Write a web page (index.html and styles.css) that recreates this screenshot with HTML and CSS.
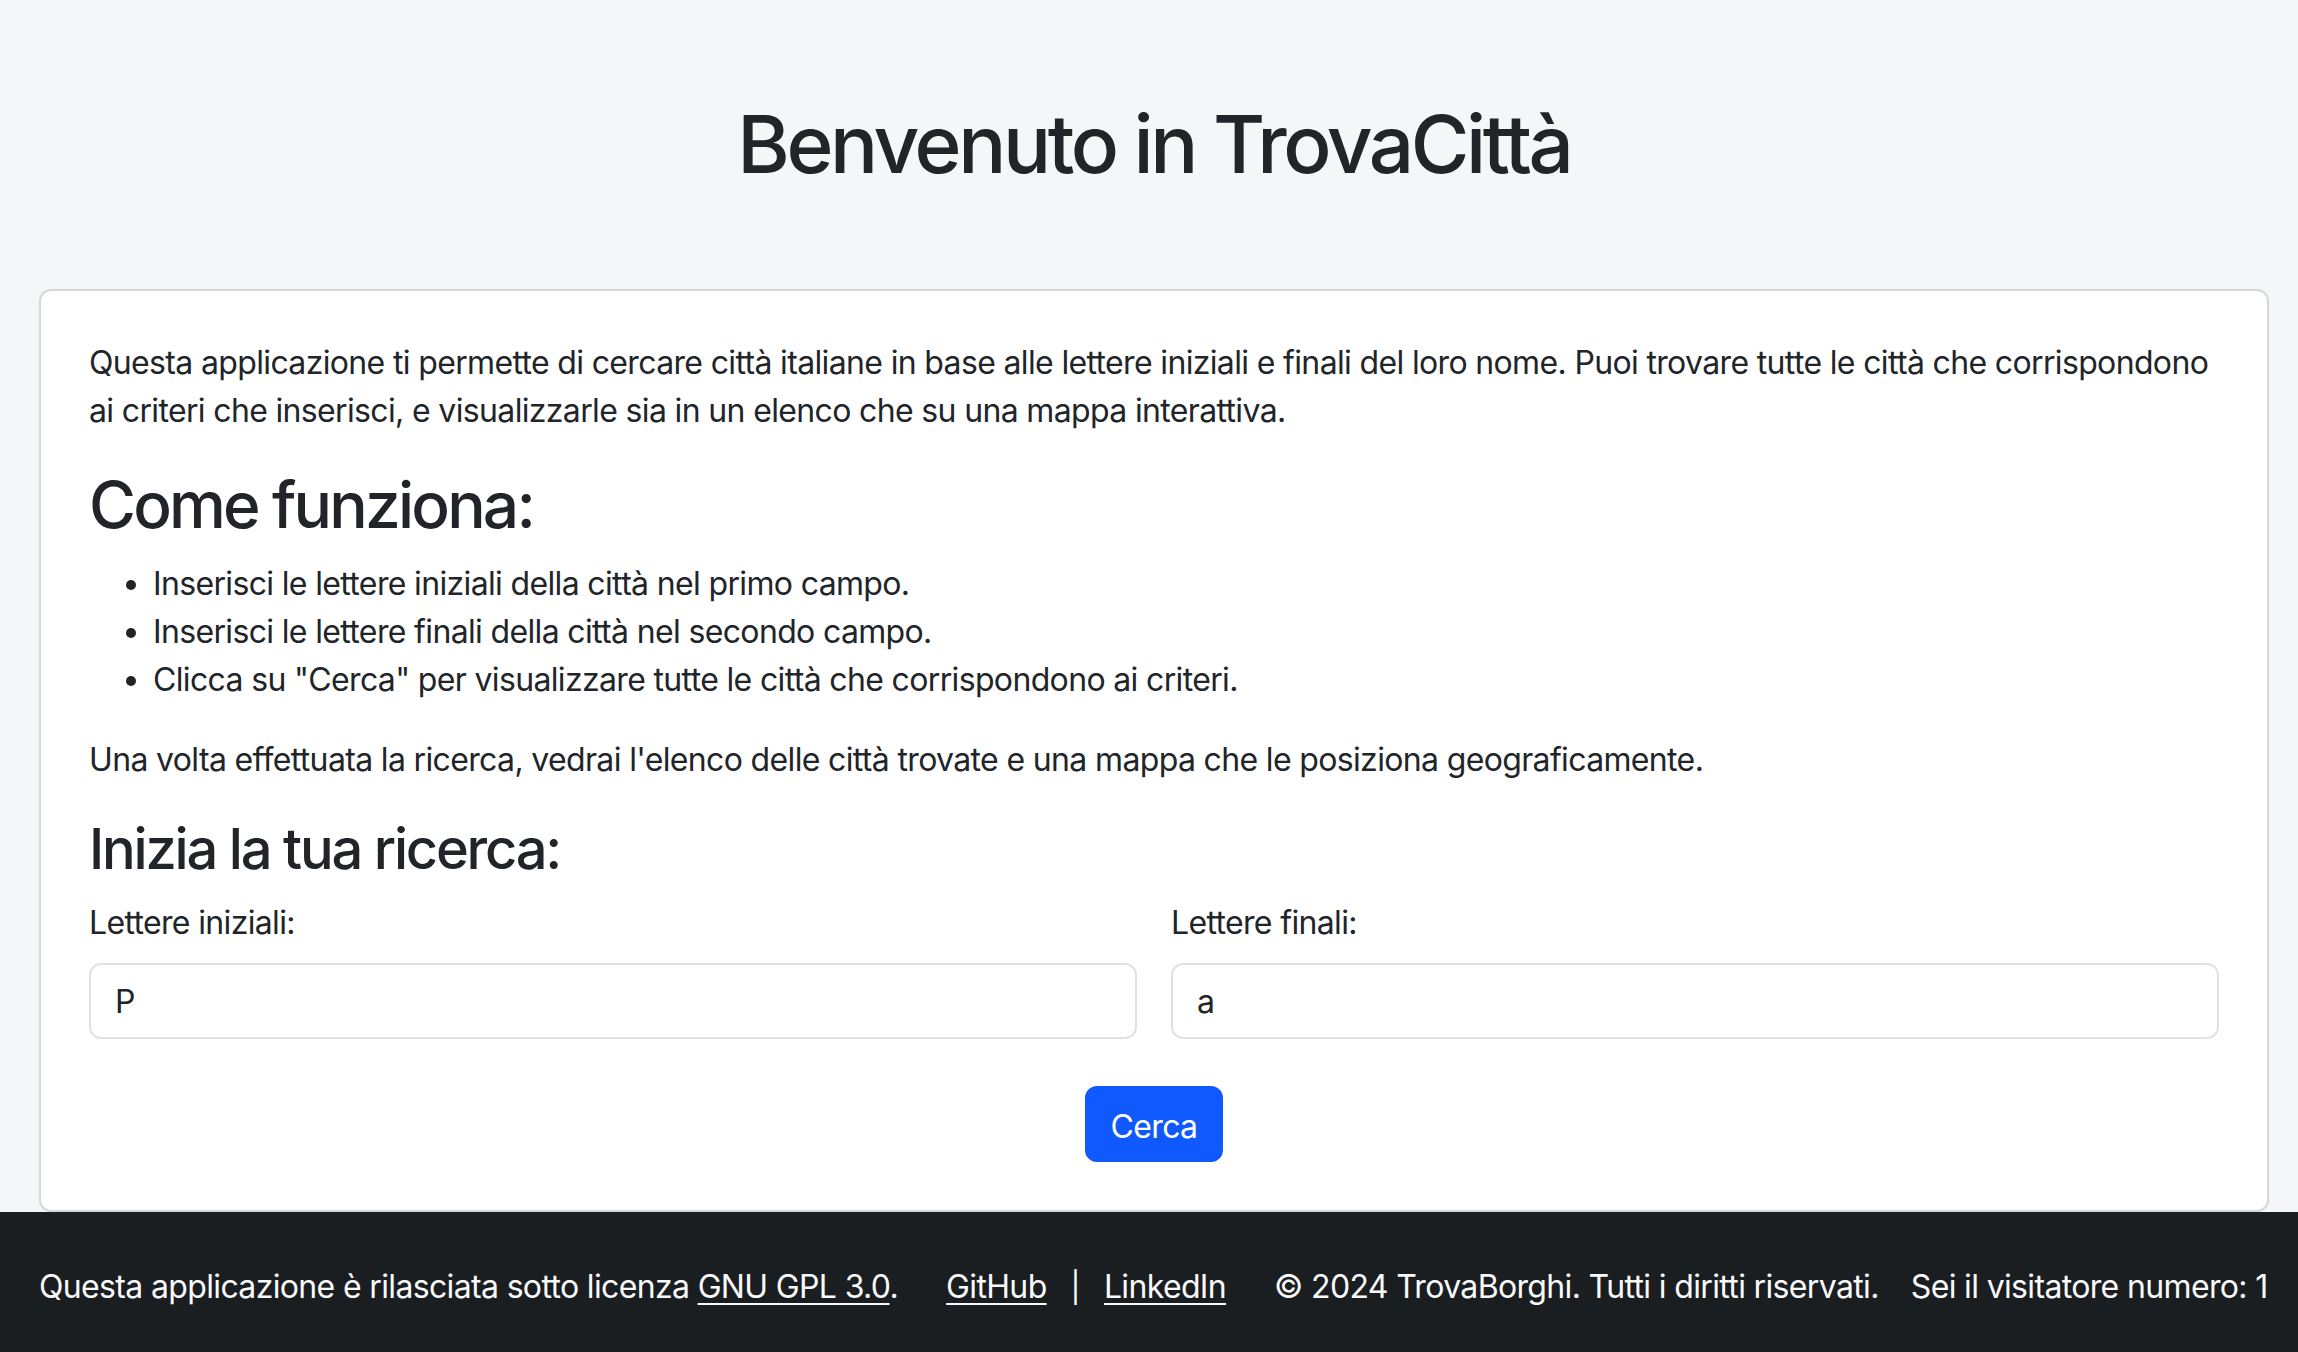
FILE: index.html
```html
<!DOCTYPE html>
<html lang="it">
<head>
<meta charset="utf-8">
<title>TrovaCittà</title>
<link rel="stylesheet" href="styles.css">
</head>
<body>
<main class="page">
  <h1 class="title">Benvenuto in TrovaCittà</h1>
  <section class="card">
    <p class="text">Questa applicazione ti permette di cercare città italiane in base alle lettere iniziali e finali del loro nome. Puoi trovare tutte le città che corrispondono ai criteri che inserisci, e visualizzarle sia in un elenco che su una mappa interattiva.</p>
    <h2 class="h2">Come funziona:</h2>
    <ul class="steps">
      <li>Inserisci le lettere iniziali della città nel primo campo.</li>
      <li>Inserisci le lettere finali della città nel secondo campo.</li>
      <li>Clicca su "Cerca" per visualizzare tutte le città che corrispondono ai criteri.</li>
    </ul>
    <p class="text">Una volta effettuata la ricerca, vedrai l'elenco delle città trovate e una mappa che le posiziona geograficamente.</p>
    <h3 class="h3">Inizia la tua ricerca:</h3>
    <form class="search">
      <div class="fields">
        <div class="field">
          <label class="label" for="start">Lettere iniziali:</label>
          <input class="input" id="start" type="text" value="P">
        </div>
        <div class="field">
          <label class="label" for="end">Lettere finali:</label>
          <input class="input" id="end" type="text" value="a">
        </div>
      </div>
      <div class="actions">
        <button class="btn" type="button">Cerca</button>
      </div>
    </form>
  </section>
</main>
<footer class="footer">
  <div class="footer-inner">
    <span class="f-item">Questa applicazione è rilasciata sotto licenza <a class="f-link" href="#">GNU GPL 3.0</a>.</span>
    <span class="f-item f-gap"><a class="f-link" href="#">GitHub</a><span class="sep">|</span><a class="f-link" href="#">LinkedIn</a></span>
    <span class="f-item f-gap">© 2024 TrovaBorghi. Tutti i diritti riservati.</span>
    <span class="f-item f-gap-sm">Sei il visitatore numero: 1</span>
  </div>
</footer>
</body>
</html>
```

FILE: styles.css
```css
* { box-sizing: border-box; }

html, body {
  margin: 0;
  padding: 0;
}

body {
  background: #f5f6f8;
  color: #212529;
  font-family: "Inter", "Liberation Sans", sans-serif;
  font-size: 32px;
  line-height: 48px;
  letter-spacing: -0.65px;
}

.page {
  padding: 96px 29px 0 39px;
}

.title {
  margin: 0 0 97px;
  font-size: 80px;
  line-height: 96px;
  font-weight: 500;
  letter-spacing: -3.4px;
  text-align: center;
}

.card {
  background: #fff;
  border: 2px solid #d6d7d9;
  border-radius: 12px;
  padding: 48px;
}

.text {
  margin: 0 0 32px;
}

.h2 {
  margin: 0 0 16px;
  font-size: 64px;
  line-height: 76.8px;
  font-weight: 500;
  letter-spacing: -2.8px;
}

.h3 {
  margin: 0 0 16px;
  font-size: 56px;
  line-height: 67.2px;
  font-weight: 500;
  letter-spacing: -2.2px;
}

.steps {
  margin: 0 0 32px;
  padding-left: 64px;
}

.search {
  margin: 0;
}

.fields {
  display: grid;
  grid-template-columns: 1fr 1fr;
  column-gap: 34px;
}

.field {
  display: flex;
  flex-direction: column;
}

.label {
  display: block;
  margin-bottom: 16px;
}

.input {
  display: block;
  width: 100%;
  height: 76px;
  padding: 12px 24px;
  font-family: "Inter", "Liberation Sans", sans-serif;
  font-size: 32px;
  line-height: 48px;
  letter-spacing: -0.65px;
  color: #212529;
  background: #fff;
  border: 2px solid #dee2e6;
  border-radius: 12px;
  outline: none;
}

.actions {
  display: flex;
  justify-content: center;
  margin-top: 47px;
}

.btn {
  height: 76px;
  padding: 15px 24px 9px;
  font-family: "Inter", "Liberation Sans", sans-serif;
  font-size: 32px;
  line-height: 48px;
  letter-spacing: -0.65px;
  color: #fff;
  background: #1059fe;
  border: 2px solid #1059fe;
  border-radius: 12px;
}

.footer {
  background: #1b1e21;
  color: #f8f9fa;
  padding: 51px 29px 45px 39px;
}

.footer-inner {
  display: flex;
  align-items: baseline;
  white-space: nowrap;
}

.f-gap {
  margin-left: 48px;
}

.f-gap-sm {
  margin-left: 32px;
}

.f-link {
  color: #f8f9fa;
  text-decoration: underline;
  text-underline-offset: 5px;
  text-decoration-thickness: 2px;
}

.sep {
  margin: 0 24px;
  font-size: 30px;
}
```
